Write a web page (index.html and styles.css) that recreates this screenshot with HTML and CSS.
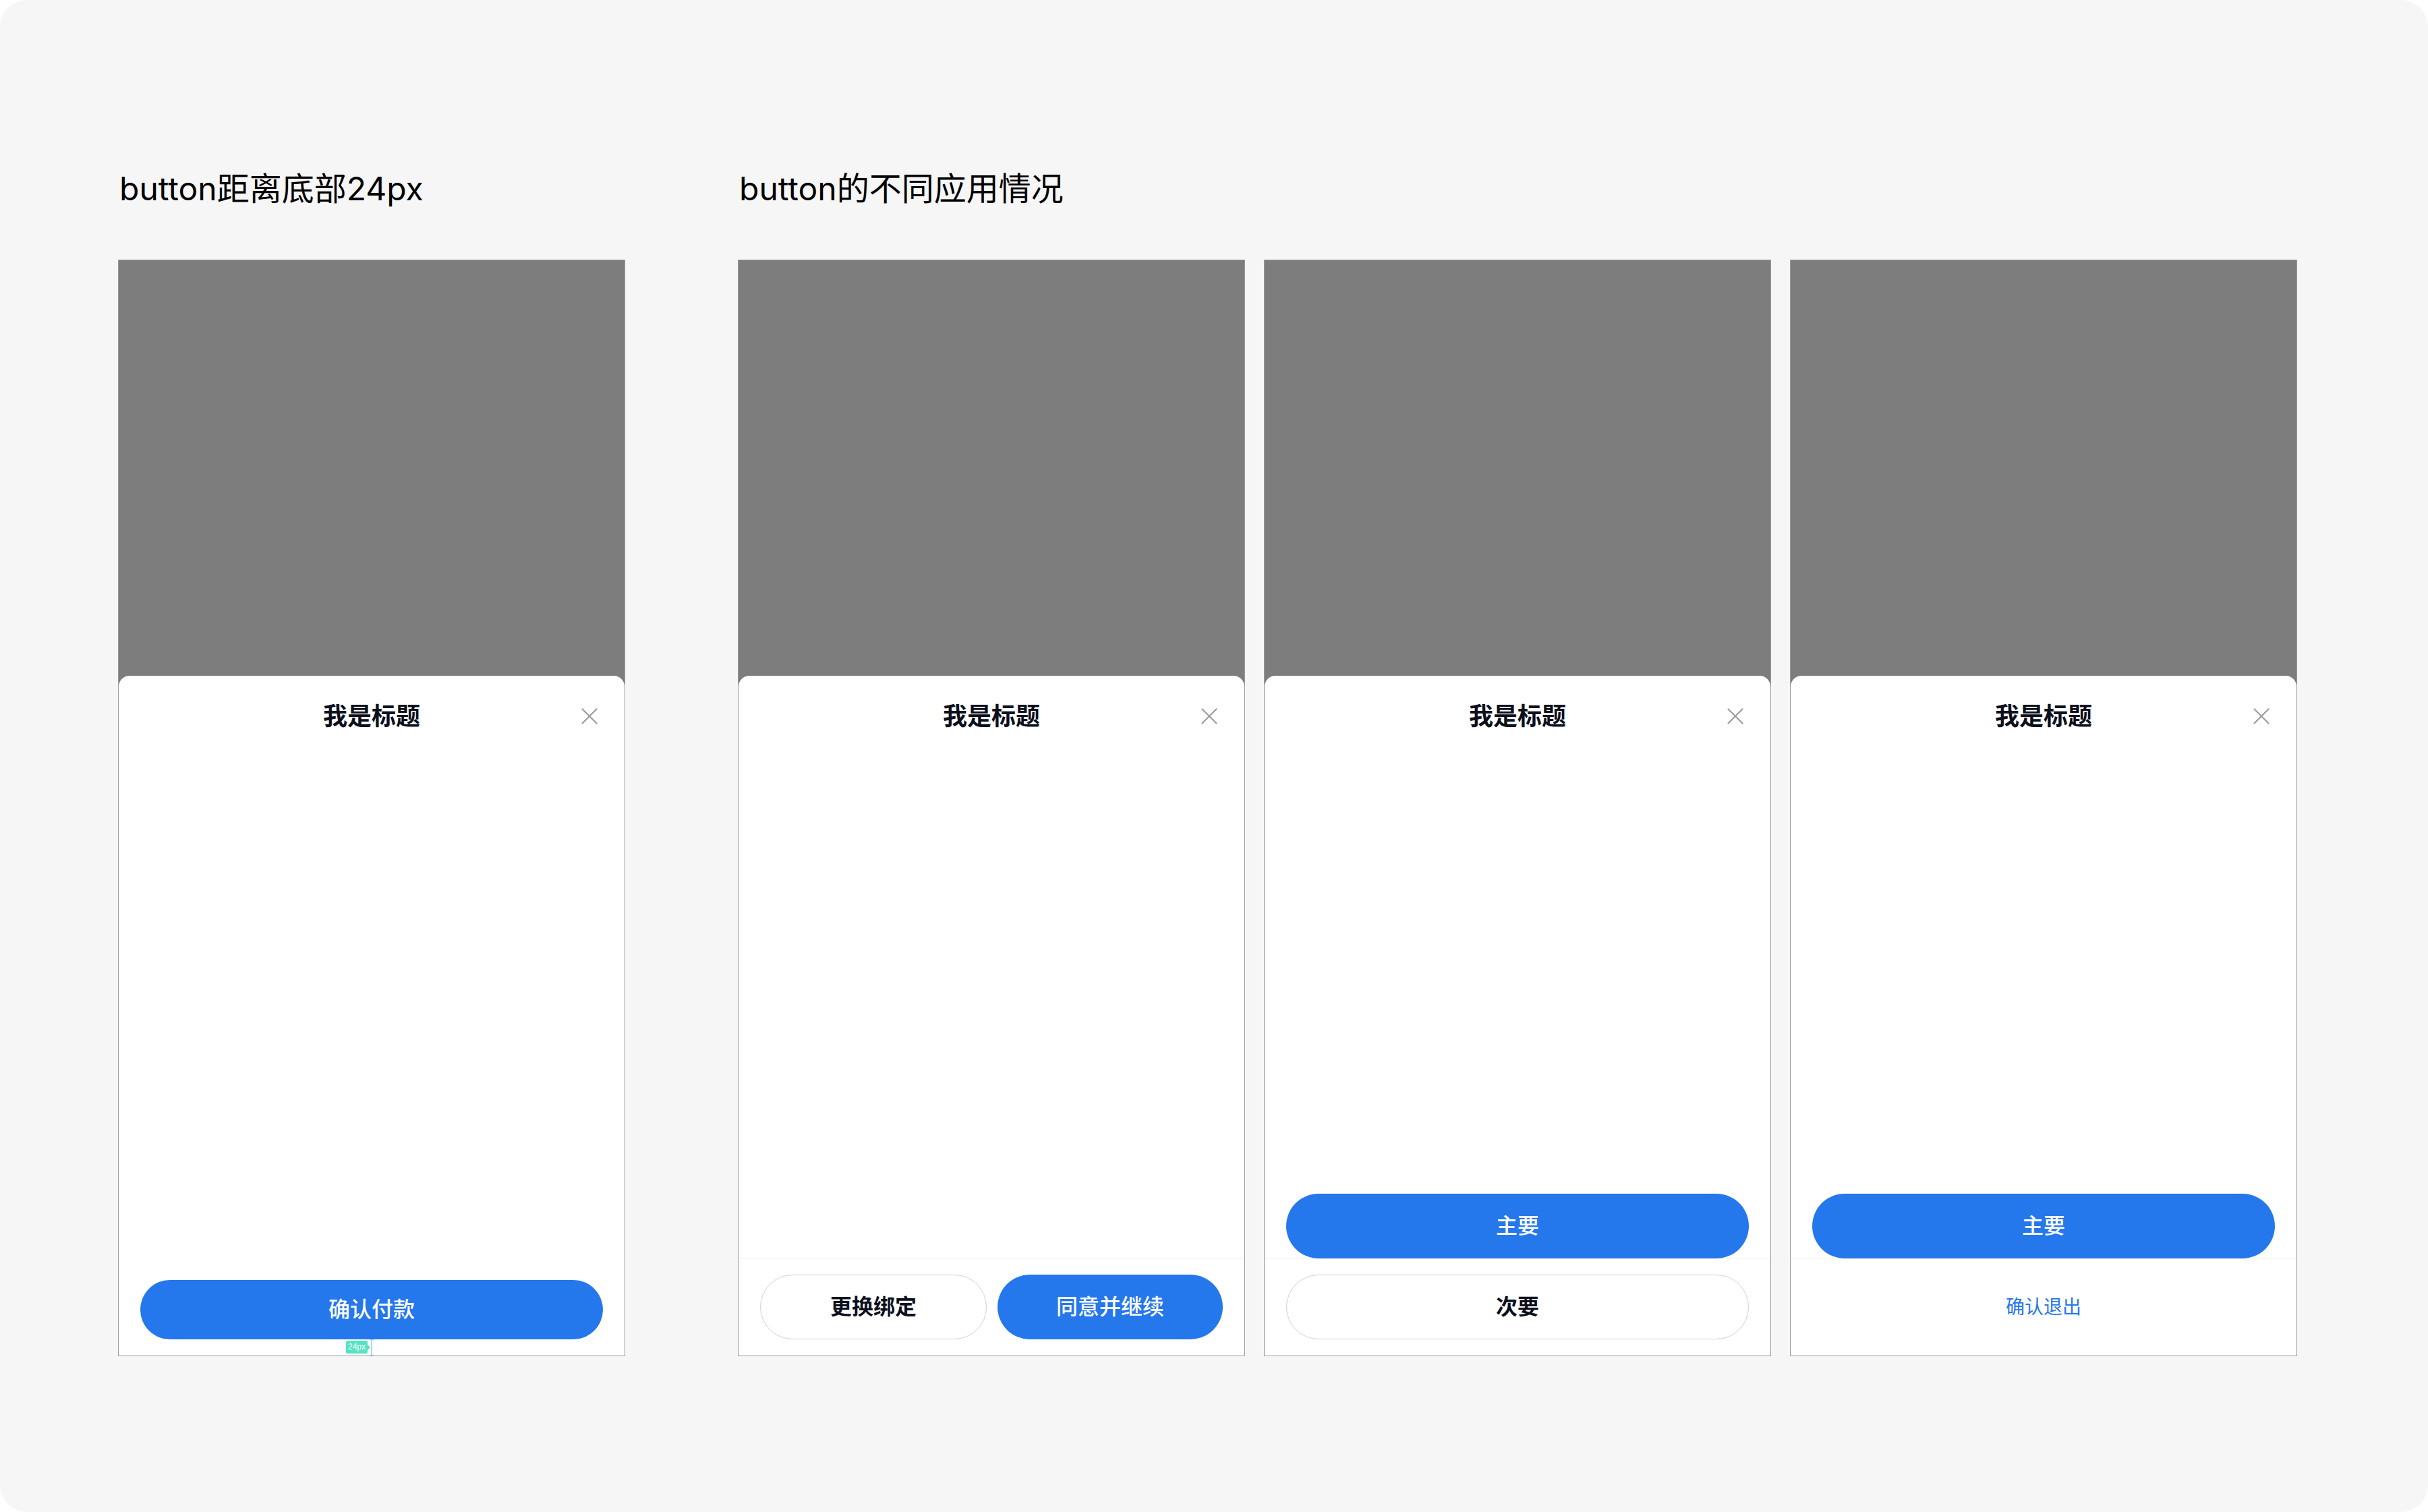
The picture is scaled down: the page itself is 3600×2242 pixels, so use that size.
FILE: index.html
```html
<!DOCTYPE html>
<html lang="zh-CN">
<head>
<meta charset="utf-8">
<title>button</title>
<link rel="stylesheet" href="styles.css">
</head>
<body>
<div class="canvas">
  <section class="group">
    <h2 class="group-title">button距离底部24px</h2>
    <div class="phones">
      <div class="phone">
        <div class="mask"></div>
        <div class="sheet">
          <div class="sheet-head">
            <span class="sheet-title">我是标题</span>
            <span class="close"><svg width="24" height="24" viewBox="0 0 24 24"><path d="M1.5 1.5L22.5 22.5M22.5 1.5L1.5 22.5" stroke="#9a9ca3" stroke-width="2.2" stroke-linecap="round" fill="none"/></svg></span>
          </div>
          <div class="sheet-body"></div>
          <div class="single">
            <div class="btn btn-primary btn-88">确认付款</div>
            <div class="measure">
              <span class="measure-tag">24px</span>
              <span class="measure-line"></span>
            </div>
          </div>
        </div>
      </div>
    </div>
  </section>

  <section class="group">
    <h2 class="group-title">button的不同应用情况</h2>
    <div class="phones">
      <div class="phone">
        <div class="mask"></div>
        <div class="sheet">
          <div class="sheet-head">
            <span class="sheet-title">我是标题</span>
            <span class="close"><svg width="24" height="24" viewBox="0 0 24 24"><path d="M1.5 1.5L22.5 22.5M22.5 1.5L1.5 22.5" stroke="#9a9ca3" stroke-width="2.2" stroke-linecap="round" fill="none"/></svg></span>
          </div>
          <div class="sheet-body"></div>
          <div class="footer footer-row">
            <div class="btn btn-outline">更换绑定</div>
            <div class="btn btn-primary">同意并继续</div>
          </div>
        </div>
      </div>

      <div class="phone">
        <div class="mask"></div>
        <div class="sheet">
          <div class="sheet-head">
            <span class="sheet-title">我是标题</span>
            <span class="close"><svg width="24" height="24" viewBox="0 0 24 24"><path d="M1.5 1.5L22.5 22.5M22.5 1.5L1.5 22.5" stroke="#9a9ca3" stroke-width="2.2" stroke-linecap="round" fill="none"/></svg></span>
          </div>
          <div class="sheet-body"></div>
          <div class="stack-primary">
            <div class="btn btn-primary">主要</div>
          </div>
          <div class="footer">
            <div class="btn btn-outline">次要</div>
          </div>
        </div>
      </div>

      <div class="phone">
        <div class="mask"></div>
        <div class="sheet">
          <div class="sheet-head">
            <span class="sheet-title">我是标题</span>
            <span class="close"><svg width="24" height="24" viewBox="0 0 24 24"><path d="M1.5 1.5L22.5 22.5M22.5 1.5L1.5 22.5" stroke="#9a9ca3" stroke-width="2.2" stroke-linecap="round" fill="none"/></svg></span>
          </div>
          <div class="sheet-body"></div>
          <div class="stack-primary">
            <div class="btn btn-primary">主要</div>
          </div>
          <div class="footer">
            <div class="btn btn-link">确认退出</div>
          </div>
        </div>
      </div>
    </div>
  </section>
</div>
</body>
</html>
```

FILE: styles.css
```css
* { box-sizing: border-box; }

html, body {
  margin: 0;
  padding: 0;
  background: #ffffff;
}

body {
  font-family: "Inter", "Noto Sans CJK SC", sans-serif;
  color: #000;
}

.canvas {
  width: 3600px;
  height: 2242px;
  background: #f6f6f6;
  border-radius: 40px;
  display: flex;
  gap: 167px;
  padding: 256px 0 0 175px;
}

.group {
  display: flex;
  flex-direction: column;
}

.group-title {
  margin: 0 0 81px 2px;
  font-size: 48px;
  line-height: 48px;
  font-weight: 400;
  color: #000;
  white-space: nowrap;
}

.phones {
  display: flex;
  gap: 28px;
}

.phone {
  width: 752px;
  height: 1626px;
  border: 1px solid #9a9a9a;
  background: #7d7d7d;
  display: flex;
  flex-direction: column;
}

.mask {
  height: 616px;
  flex: none;
}

.sheet {
  flex: 1;
  background: #ffffff;
  border-radius: 16px 16px 0 0;
  display: flex;
  flex-direction: column;
}

.sheet-head {
  height: 120px;
  flex: none;
  display: grid;
  grid-template-columns: 1fr auto 1fr;
  align-items: center;
}

.sheet-title {
  grid-column: 2;
  font-size: 36px;
  line-height: 40px;
  font-weight: 700;
  color: #0c0f1c;
}

.close {
  grid-column: 3;
  justify-self: end;
  margin-right: 40px;
  width: 24px;
  height: 24px;
  display: flex;
}

.sheet-body {
  flex: 1;
}

.btn {
  height: 96px;
  border-radius: 48px;
  display: flex;
  align-items: center;
  justify-content: center;
  font-size: 32px;
  line-height: 40px;
  font-weight: 500;
}

.btn-88 {
  height: 88px;
  border-radius: 44px;
}

.btn-primary {
  background: #2577ec;
  color: #ffffff;
}

.btn-outline {
  background: #ffffff;
  border: 1px solid #d0d0d0;
  color: #0c0f1c;
  font-weight: 600;
}

.btn-link {
  color: #2577ec;
  font-size: 28px;
  font-weight: 400;
}

.single {
  margin: 0 32px 24px;
  position: relative;
}

.measure {
  position: absolute;
  left: 50%;
  top: 100%;
  height: 24px;
  width: 0;
}

.measure-line {
  position: absolute;
  left: -1px;
  top: 0;
  width: 2px;
  height: 24px;
  background: #a9d6ee;
}

.measure-line::before,
.measure-line::after {
  content: "";
  position: absolute;
  left: -2px;
  width: 6px;
  height: 1px;
  background: #a9d6ee;
}

.measure-line::before { top: 0; }
.measure-line::after { bottom: 0; }

.measure-tag {
  position: absolute;
  right: 6px;
  top: 2px;
  height: 19px;
  padding: 0 3px;
  background: #56e3c3;
  border-radius: 2px;
  color: #ffffff;
  font-family: "Liberation Sans", sans-serif;
  font-size: 12px;
  line-height: 19px;
  white-space: nowrap;
}

.measure-tag::after {
  content: "";
  position: absolute;
  right: -4px;
  top: 6px;
  border-left: 4px solid #56e3c3;
  border-top: 4px solid transparent;
  border-bottom: 4px solid transparent;
}

.stack-primary {
  margin: 0 32px;
  flex: none;
}

.footer {
  flex: none;
  border-top: 1px solid #f2f2f2;
  padding: 23px 32px 24px;
}

.footer-row {
  display: flex;
  gap: 16px;
}

.footer-row .btn {
  flex: 1;
}
```
